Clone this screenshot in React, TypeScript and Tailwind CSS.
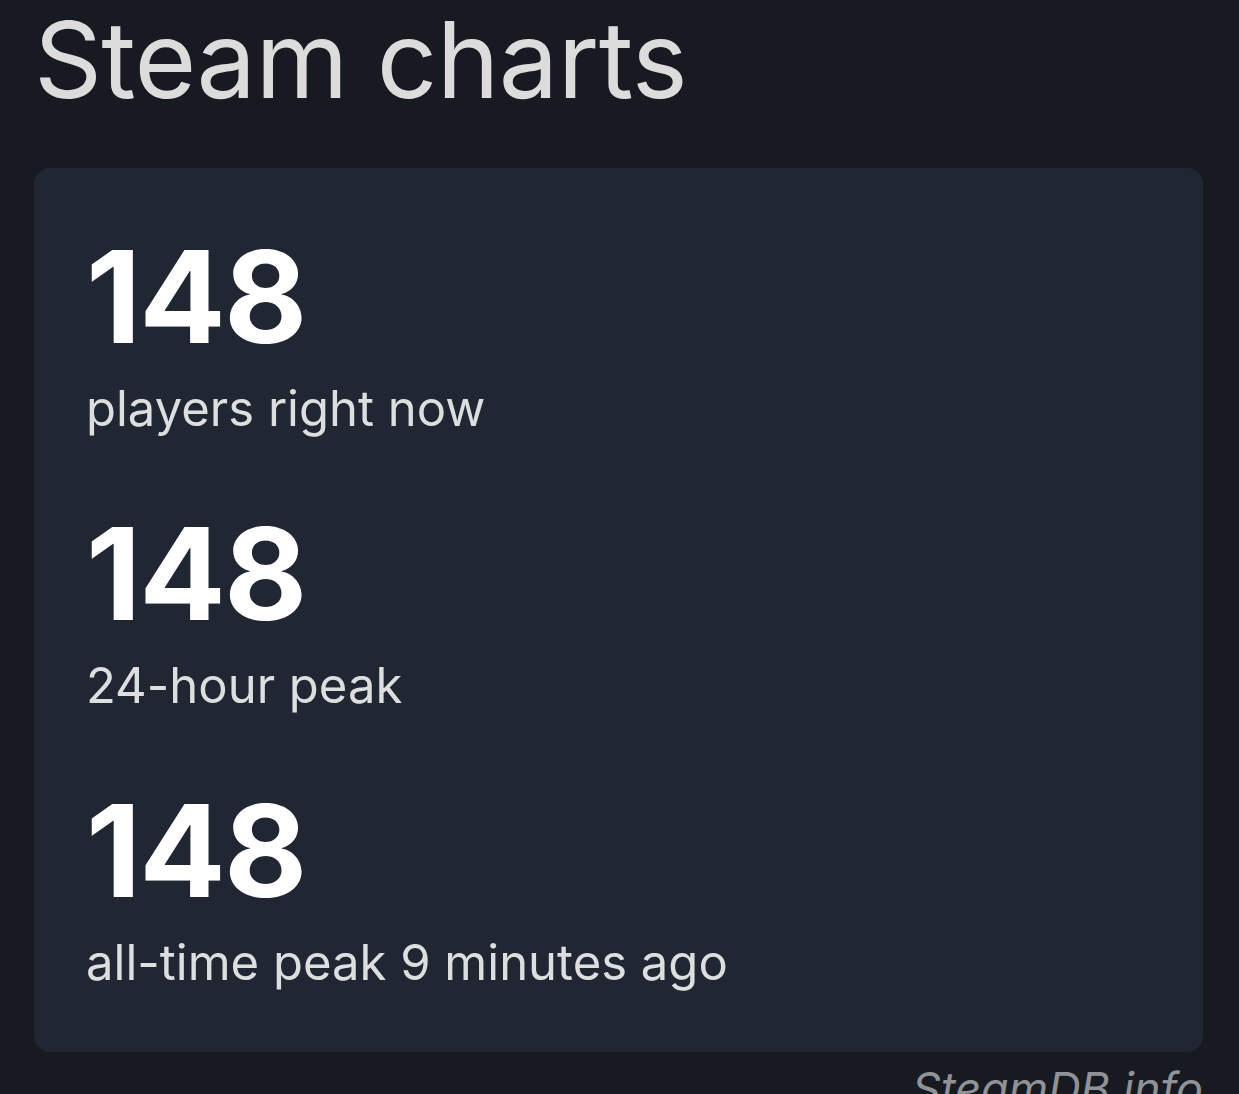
export default function App() {
  const stats = [
    { value: '148', label: 'players right now' },
    { value: '148', label: '24-hour peak' },
    { value: '148', label: 'all-time peak 9 minutes ago' },
  ];

  return (
    <div
      className="min-h-screen bg-[#171a21] pl-[34px] pr-[36px] pt-[7px] overflow-hidden"
      style={{ fontFamily: 'Inter, "Noto Sans", sans-serif' }}
    >
      <h1 className="text-[106px] leading-[1.1] -mt-[5px] font-normal text-[#dcdcdc] tracking-[-0.006em]">Steam charts</h1>

      <div className="mt-[49px] rounded-2xl bg-[#202733] pl-[52px] pt-[65px] pb-[65px] flex flex-col gap-[77px]">
        {stats.map((s, i) => (
          <div key={i} className="flex flex-col gap-[23px]">
            <div className="text-[128px] leading-[128px] font-bold text-white tracking-[-0.015em]">{s.value}</div>
            <div className="text-[49px] leading-[49px] text-[#dcdee0]">{s.label}</div>
          </div>
        ))}
      </div>

      <div className="flex justify-end mt-[10px]">
        <span className="text-[45px] leading-[1.2] italic text-[#8f9296]">SteamDB.info</span>
      </div>
    </div>
  );
}
